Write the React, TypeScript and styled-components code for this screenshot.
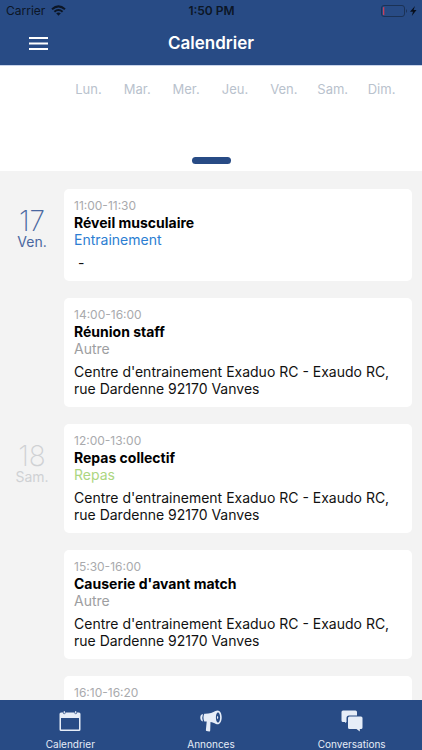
import React from "react";
import styled, { createGlobalStyle } from "styled-components";

const NAVY = "#284b85";

const GlobalStyle = createGlobalStyle`
  * { box-sizing: border-box; }
  body {
    margin: 0;
    font-family: Inter, "Liberation Sans", sans-serif;
    background: #f3f3f3;
  }
  button { font-family: inherit; }
`;

const Screen = styled.div`
  display: flex;
  flex-direction: column;
  height: 100vh;
  overflow: hidden;
`;

const TopArea = styled.header`
  flex: none;
  background: ${NAVY};
  border-bottom: 1px solid #c9d4ea;
`;

const StatusBar = styled.div`
  display: grid;
  grid-template-columns: 1fr auto 1fr;
  align-items: center;
  height: 21px;
  padding: 0 5px 0 6px;
  font-size: 12px;
  color: #0c1626;
`;

const Carrier = styled.span`
  display: flex;
  align-items: center;
  gap: 6px;
`;

const Clock = styled.span`
  font-weight: 600;
`;

const Power = styled.span`
  display: flex;
  justify-content: flex-end;
`;

const NavBar = styled.div`
  display: grid;
  grid-template-columns: 76px 1fr 76px;
  align-items: center;
  height: 44px;
`;

const MenuButton = styled.button`
  display: flex;
  justify-content: center;
  padding: 8px 0;
  border: 0;
  background: none;
  color: #fff;
  cursor: pointer;
`;

const Title = styled.h1`
  margin: 0;
  font-size: 17px;
  line-height: 22px;
  font-weight: 600;
  text-align: center;
  color: #fff;
`;

const WeekPanel = styled.section`
  display: flex;
  flex: none;
  flex-direction: column;
  align-items: stretch;
  justify-content: space-between;
  height: 105px;
  padding: 14px 16px 7px 64px;
  background: #fff;
`;

const WeekDays = styled.div`
  display: grid;
  grid-template-columns: repeat(7, 1fr);
  font-size: 13px;
  line-height: 18px;
  text-align: center;
  color: #b9c2cd;
`;

const Handle = styled.button`
  align-self: center;
  width: 39px;
  height: 7px;
  margin-right: 48px;
  padding: 0;
  border: 0;
  border-radius: 4px;
  background: ${NAVY};
  cursor: pointer;
`;

const Agenda = styled.main`
  flex: 1;
  min-height: 0;
  overflow: hidden;
  padding-top: 18px;
`;

const Day = styled.section`
  display: grid;
  grid-template-columns: 64px 1fr;
  padding-right: 10px;
`;

const DayLabel = styled.h2<{ $current?: boolean }>`
  display: flex;
  flex-direction: column;
  align-items: center;
  margin: 0;
  padding-top: 18px;
  font-weight: 400;
  color: ${(p) => (p.$current ? "#4a67a0" : "#cfd1d4")};
`;

const DayNumber = styled.span`
  font-size: 28px;
  line-height: 28px;
  font-weight: 200;
`;

const DayName = styled.span`
  font-size: 14px;
  line-height: 14px;
`;

const Events = styled.div`
  display: flex;
  flex-direction: column;
`;

const Card = styled.article`
  margin-bottom: 17px;
  padding: 9px 10px 10px;
  border-radius: 5px;
  background: #fff;
`;

const Time = styled.div`
  font-size: 12px;
  line-height: 16px;
  color: #a9aaad;
`;

const EventTitle = styled.h3`
  margin: 0;
  font-size: 14px;
  line-height: 17px;
  font-weight: 700;
  color: #000;
`;

const Kind = styled.div<{ $color: string }>`
  font-size: 14px;
  line-height: 17px;
  color: ${(p) => p.$color};
`;

const Place = styled.p`
  margin: 6px 0 0;
  font-size: 14px;
  line-height: 17px;
  white-space: pre-wrap;
  color: #111;
`;

const TabBar = styled.nav`
  display: grid;
  flex: none;
  grid-template-columns: repeat(3, 1fr);
  height: 50px;
  background: ${NAVY};
`;

const Tab = styled.button`
  display: flex;
  flex-direction: column;
  align-items: center;
  gap: 6px;
  padding: 10px 0 0;
  border: 0;
  background: none;
  font-size: 10px;
  line-height: 12px;
  color: #e6edf8;
  cursor: pointer;
`;

const WifiIcon = () => (
  <svg width="15" height="11" viewBox="0 0 15 11" aria-hidden="true">
    <g fill="none" stroke="#0c1626" strokeWidth="2">
      <path d="M1 4.200Q7.500 -1.400 14 4.200" />
      <path d="M3.400 6.700Q7.500 3.200 11.600 6.700" />
    </g>
    <path d="M5.200 8.300Q7.500 6.500 9.800 8.300L7.500 10.800Z" fill="#0c1626" />
  </svg>
);

const BatteryIcon = () => (
  <svg width="36" height="12" viewBox="0 0 36 12" aria-hidden="true">
    <rect x="0.500" y="0.500" width="23" height="11" rx="2.500" fill="none" stroke="#1b3256" />
    <rect x="2" y="2" width="1.300" height="8" rx="0.500" fill="#c9415b" />
    <path d="M25 4Q27 6 25 8Z" fill="#1b3256" />
    <path d="M34 1L29 6.800H32L30.800 11L35.500 5H32.600Z" fill="#080f1c" />
  </svg>
);

const MenuIcon = () => (
  <svg width="19" height="13" viewBox="0 0 19 13" aria-hidden="true">
    <path d="M0 1H19M0 6.500H19M0 12H19" stroke="currentColor" strokeWidth="2" />
  </svg>
);

const CalendarIcon = () => (
  <svg width="22" height="22" viewBox="0 0 22 22" aria-hidden="true">
    <path
      fill="currentColor"
      fillRule="evenodd"
      d="M2 2.500H4.200V3.500Q5.300 5 6.400 3.500V2.500H15.600V3.500Q16.700 5 17.800 3.500V2.500H20Q21.500 2.500 21.500 4V19.500Q21.500 21 20 21H2Q0.500 21 0.500 19.500V4Q0.500 2.500 2 2.500ZM2 8V19Q2 19.500 2.500 19.500H19.500Q20 19.500 20 19V8Z"
    />
    <path d="M5.300 1.500V3M16.700 1.500V3" stroke="currentColor" strokeWidth="1.200" strokeLinecap="round" />
  </svg>
);

const MegaphoneIcon = () => (
  <svg width="22" height="22" viewBox="0 0 22 22" aria-hidden="true">
    <path
      fill="currentColor"
      fillRule="evenodd"
      d="M4.300 3.800C9 4 13 2.500 15.500 1C19.500 -1 21.700 3 21.700 7.300C21.700 12 19.500 15.500 16 14C14 12.900 12.500 12.300 10.500 12L10.200 20.500Q10.200 21.500 9.200 21.400L6.600 21Q5.800 20.800 5.900 20L6.700 11.600L4.300 11.500Q2.600 7.500 4.300 3.800ZM18 2.200C15.200 3 15.200 11.800 18 12.700C20.800 11.800 20.800 3 18 2.200Z"
    />
    <path d="M17.300 5.700Q19.200 7.400 17.300 9.300Q16.600 7.500 17.300 5.700Z" fill="currentColor" />
    <path d="M3 3.900Q0.300 4.300 0.300 7.600Q0.300 11 3 11.400Q1.500 7.700 3 3.900Z" fill="currentColor" />
  </svg>
);

const ChatIcon = () => (
  <svg width="22" height="22" viewBox="0 0 22 22" aria-hidden="true">
    <path
      fill="currentColor"
      d="M2 0.500H14.500Q16 0.500 16 2V5.500H8Q5.500 5.500 5.500 8V12L4 13V12H2Q0.500 12 0.500 10.500V2Q0.500 0.500 2 0.500Z"
    />
    <path
      fill="currentColor"
      d="M8.500 6.500H20Q21.500 6.500 21.500 8V17.500Q21.500 19 20 19H18.800V21.500L15.500 19H8.500Q7 19 7 17.500V8Q7 6.500 8.500 6.500Z"
    />
  </svg>
);

interface EventData {
  time: string;
  title: string;
  kind: string;
  color: string;
  place: string;
}

interface DayData {
  number: string;
  name: string;
  current?: boolean;
  events: EventData[];
}

const CENTRE = "Centre d'entrainement Exaduo RC - Exaudo RC, rue Dardenne 92170 Vanves";
const GREY = "#9d9ea1";

const days: DayData[] = [
  {
    number: "17",
    name: "Ven.",
    current: true,
    events: [
      { time: "11:00-11:30", title: "Réveil musculaire", kind: "Entrainement", color: "#2c7ed2", place: " - " },
      { time: "14:00-16:00", title: "Réunion staff", kind: "Autre", color: GREY, place: CENTRE },
    ],
  },
  {
    number: "18",
    name: "Sam.",
    events: [
      { time: "12:00-13:00", title: "Repas collectif", kind: "Repas", color: "#acd681", place: CENTRE },
      { time: "15:30-16:00", title: "Causerie d'avant match", kind: "Autre", color: GREY, place: CENTRE },
      { time: "16:10-16:20", title: "", kind: "", color: GREY, place: "" },
    ],
  },
];

const weekDays = ["Lun.", "Mar.", "Mer.", "Jeu.", "Ven.", "Sam.", "Dim."];

const tabs = [
  { label: "Calendrier", icon: <CalendarIcon /> },
  { label: "Annonces", icon: <MegaphoneIcon /> },
  { label: "Conversations", icon: <ChatIcon /> },
];

export default function App() {
  return (
    <>
      <GlobalStyle />
      <Screen>
        <TopArea>
          <StatusBar>
            <Carrier>
              Carrier <WifiIcon />
            </Carrier>
            <Clock>1:50 PM</Clock>
            <Power>
              <BatteryIcon />
            </Power>
          </StatusBar>
          <NavBar>
            <MenuButton aria-label="Menu">
              <MenuIcon />
            </MenuButton>
            <Title>Calendrier</Title>
          </NavBar>
        </TopArea>
        <WeekPanel>
          <WeekDays>
            {weekDays.map((name) => (
              <span key={name}>{name}</span>
            ))}
          </WeekDays>
          <Handle aria-label="Ouvrir le calendrier" />
        </WeekPanel>
        <Agenda>
          {days.map((day) => (
            <Day key={day.number}>
              <DayLabel $current={day.current}>
                <DayNumber>{day.number}</DayNumber>
                <DayName>{day.name}</DayName>
              </DayLabel>
              <Events>
                {day.events.map((event) => (
                  <Card key={event.time}>
                    <Time>{event.time}</Time>
                    {event.title && <EventTitle>{event.title}</EventTitle>}
                    {event.kind && <Kind $color={event.color}>{event.kind}</Kind>}
                    {event.place && <Place>{event.place}</Place>}
                  </Card>
                ))}
              </Events>
            </Day>
          ))}
        </Agenda>
        <TabBar>
          {tabs.map((tab) => (
            <Tab key={tab.label}>
              {tab.icon}
              {tab.label}
            </Tab>
          ))}
        </TabBar>
      </Screen>
    </>
  );
}
